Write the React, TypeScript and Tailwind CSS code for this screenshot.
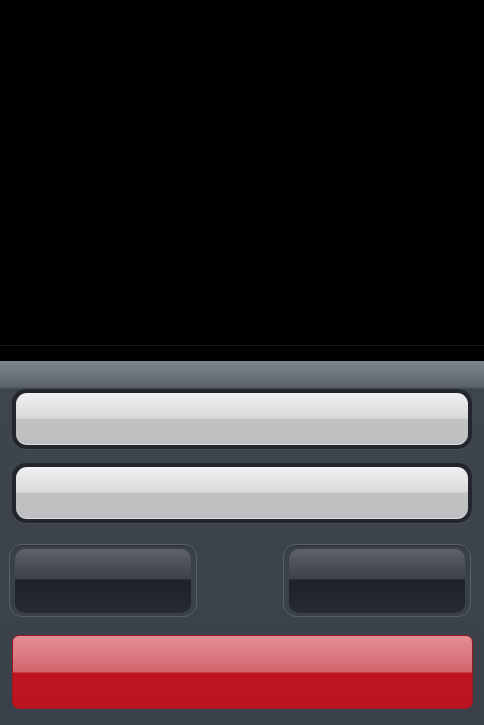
import React from 'react';

const LightField: React.FC = () => (
  <div className="mx-[12px] w-[460px] rounded-[14px] bg-[#23272d] p-[4px] shadow-[0_1px_0_#4b5159]">
    <div className="h-[52px] rounded-[11px] border-b border-[#dcdcde] bg-[linear-gradient(to_bottom,#f0f0f2_0px,#e4e4e6_14px,#dadadc_25px,#c1c2c4_26px,#bebfc1_100%)]" />
  </div>
);

const DarkButton: React.FC = () => (
  <div className="w-[188px] h-[73px] rounded-[13px] border border-[#5a6068] bg-[#3a4049] px-[5px] pt-[4px] pb-[3px] shadow-[inset_0_1px_0_#2a2e34]">
    <div className="h-full rounded-[10px] bg-[linear-gradient(to_bottom,#5d626b_0px,#474c55_18px,#3b4049_30px,#1c212a_31px,#252a33_100%)]" />
  </div>
);

export default function App() {
  return (
    <div className="w-[484px] h-[725px] overflow-hidden bg-black">
      <div className="h-[345px] bg-black" />
      <div className="h-px bg-[#171717]" />
      <div className="h-[15px] bg-black" />
      <div className="h-[364px] bg-[linear-gradient(to_bottom,#7c848e_0px,#6b737d_14px,#59616b_26px,#3f454e_28px,#3b414a_100%)] pt-[28px]">
        <LightField />
        <div className="h-[14px]" />
        <LightField />
        <div className="mt-[21px] flex justify-between pl-[9px] pr-[13px]">
          <DarkButton />
          <DarkButton />
        </div>
        <div className="mt-[18px] ml-[12px] w-[461px] h-[74px] rounded-[7px] border border-[#9c1a24] bg-[linear-gradient(to_bottom,#e28d92_0px,#db7b82_18px,#d1636c_36px,#be1621_37px,#bb1420_100%)]" />
      </div>
    </div>
  );
}
